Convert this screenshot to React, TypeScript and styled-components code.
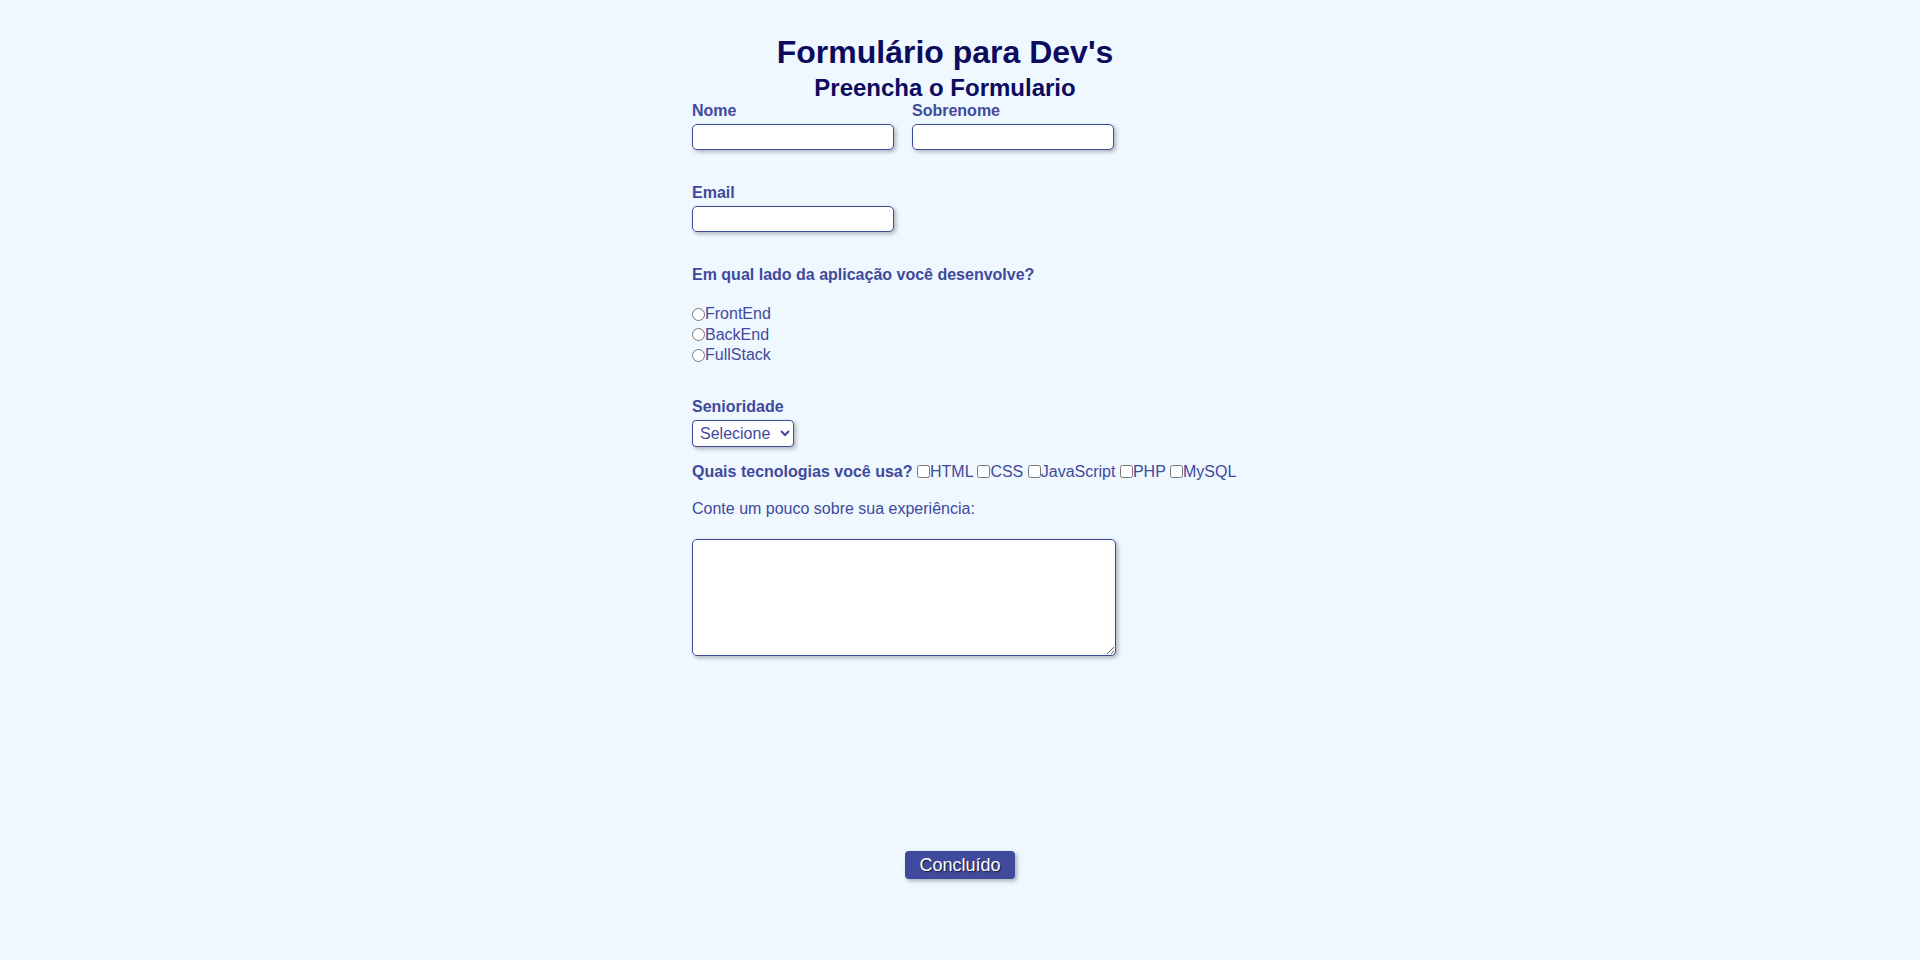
import React from "react";
import styled, { createGlobalStyle } from "styled-components";

const GlobalStyle = createGlobalStyle`
  * { margin: 0; padding: 0; box-sizing: border-box; }
  html, body { background: #eff7ff; }
  body {
    font-family: "Liberation Sans", Arial, sans-serif;
    font-size: 16px;
    color: #3f4a9c;
  }
`;

const Page = styled.main`
  min-height: 960px;
  padding-top: 34px;
  display: flex;
  flex-direction: column;
  align-items: center;
`;

const Form = styled.form`
  width: 536px;
  display: flex;
  flex-direction: column;
  align-items: flex-start;
`;

const Header = styled.header`
  align-self: stretch;
  padding-right: 30px;
  text-align: center;
  color: #0c0b5e;
`;

const Title = styled.h1`
  font-size: 32px;
  line-height: 37px;
  font-weight: 700;
`;

const Subtitle = styled.h2`
  margin-top: 3px;
  font-size: 24px;
  line-height: 28px;
  font-weight: 700;
`;

const Row = styled.div<{ $mt?: number }>`
  display: flex;
  gap: 18px;
  margin-top: ${(p) => p.$mt ?? 0}px;
`;

const Field = styled.div<{ $mt?: number }>`
  display: flex;
  flex-direction: column;
  align-items: flex-start;
  gap: 4px;
  margin-top: ${(p) => p.$mt ?? 0}px;
`;

const Label = styled.label`
  font-weight: 700;
  line-height: 18px;
`;

const TextInput = styled.input`
  width: 202px;
  height: 26px;
  border: 1px solid #3f4a9c;
  border-radius: 5px;
  background: #fff;
  box-shadow: 2px 2px 4px rgba(0, 0, 0, 0.28);
  padding: 2px 6px;
  font: inherit;
  color: #3f4a9c;
  outline: none;
`;

const Question = styled.p<{ $mt?: number }>`
  margin-top: ${(p) => p.$mt ?? 0}px;
  font-weight: 700;
  line-height: 18px;
`;

const RadioList = styled.div`
  margin-top: 20px;
  display: flex;
  flex-direction: column;
`;

const Option = styled.label`
  line-height: 20.5px;
  display: inline-flex;
  align-items: center;
`;

const Radio = styled.input`
  margin: 0;
  width: 13px;
  height: 13px;
`;

const Select = styled.select`
  width: 102px;
  height: 27px;
  border: 1px solid #3f4a9c;
  border-radius: 4px;
  background: #fff;
  box-shadow: 2px 2px 4px rgba(0, 0, 0, 0.28);
  padding: 0 4px 0 3px;
  font: inherit;
  color: #3f4a9c;
  outline: none;
`;

const TechLine = styled.div`
  margin-top: 16px;
  white-space: nowrap;
  line-height: 18px;
`;

const TechTitle = styled.strong`
  font-weight: 700;
`;

const Check = styled.input`
  margin: 0;
  width: 13px;
  height: 13px;
  vertical-align: -1px;
`;

const Note = styled.p`
  margin-top: 19px;
  line-height: 18px;
`;

const TextArea = styled.textarea`
  margin-top: 21px;
  width: 424px;
  height: 117px;
  border: 1px solid #3f4a9c;
  border-radius: 5px;
  background: #fff;
  box-shadow: 2px 2px 4px rgba(0, 0, 0, 0.28);
  padding: 4px;
  font: inherit;
  color: #3f4a9c;
  outline: none;
`;

const Footer = styled.div`
  align-self: stretch;
  display: flex;
  justify-content: center;
  margin-top: 195px;
`;

const Button = styled.button`
  height: 28px;
  padding: 0 14px;
  border: none;
  border-radius: 4px;
  background: #3f4a9c;
  color: #fff;
  font-family: "Liberation Sans", Arial, sans-serif;
  font-size: 18px;
  line-height: 28px;
  text-shadow: 1px 1px 1px rgba(0, 0, 0, 0.6);
  box-shadow: 2px 2px 4px rgba(0, 0, 0, 0.3);
  cursor: pointer;
`;

const techs = ["HTML", "CSS", "JavaScript", "PHP", "MySQL"];
const sides = ["FrontEnd", "BackEnd", "FullStack"];

export default function App() {
  return (
    <>
      <GlobalStyle />
      <Page>
        <Form onSubmit={(e) => e.preventDefault()}>
          <Header>
            <Title>Formulário para Dev's</Title>
            <Subtitle>Preencha o Formulario</Subtitle>
          </Header>

          <Row>
            <Field>
              <Label htmlFor="nome">Nome</Label>
              <TextInput id="nome" type="text" />
            </Field>
            <Field>
              <Label htmlFor="sobrenome">Sobrenome</Label>
              <TextInput id="sobrenome" type="text" />
            </Field>
          </Row>

          <Field $mt={34}>
            <Label htmlFor="email">Email</Label>
            <TextInput id="email" type="email" />
          </Field>

          <Question $mt={34}>Em qual lado da aplicação você desenvolve?</Question>
          <RadioList>
            {sides.map((s) => (
              <Option key={s}>
                <Radio type="radio" name="lado" value={s} />
                {s}
              </Option>
            ))}
          </RadioList>

          <Field $mt={32}>
            <Label htmlFor="senioridade">Senioridade</Label>
            <Select id="senioridade" defaultValue="">
              <option value="">Selecione</option>
              <option value="junior">Júnior</option>
              <option value="pleno">Pleno</option>
              <option value="senior">Sênior</option>
            </Select>
          </Field>

          <TechLine>
            <TechTitle>Quais tecnologias você usa?</TechTitle>{" "}
            {techs.map((t, i) => (
              <React.Fragment key={t}>
                <label>
                  <Check type="checkbox" value={t} />
                  {t}
                </label>
                {i < techs.length - 1 ? " " : ""}
              </React.Fragment>
            ))}
          </TechLine>

          <Note>Conte um pouco sobre sua experiência:</Note>
          <TextArea />

          <Footer>
            <Button type="submit">Concluído</Button>
          </Footer>
        </Form>
      </Page>
    </>
  );
}
